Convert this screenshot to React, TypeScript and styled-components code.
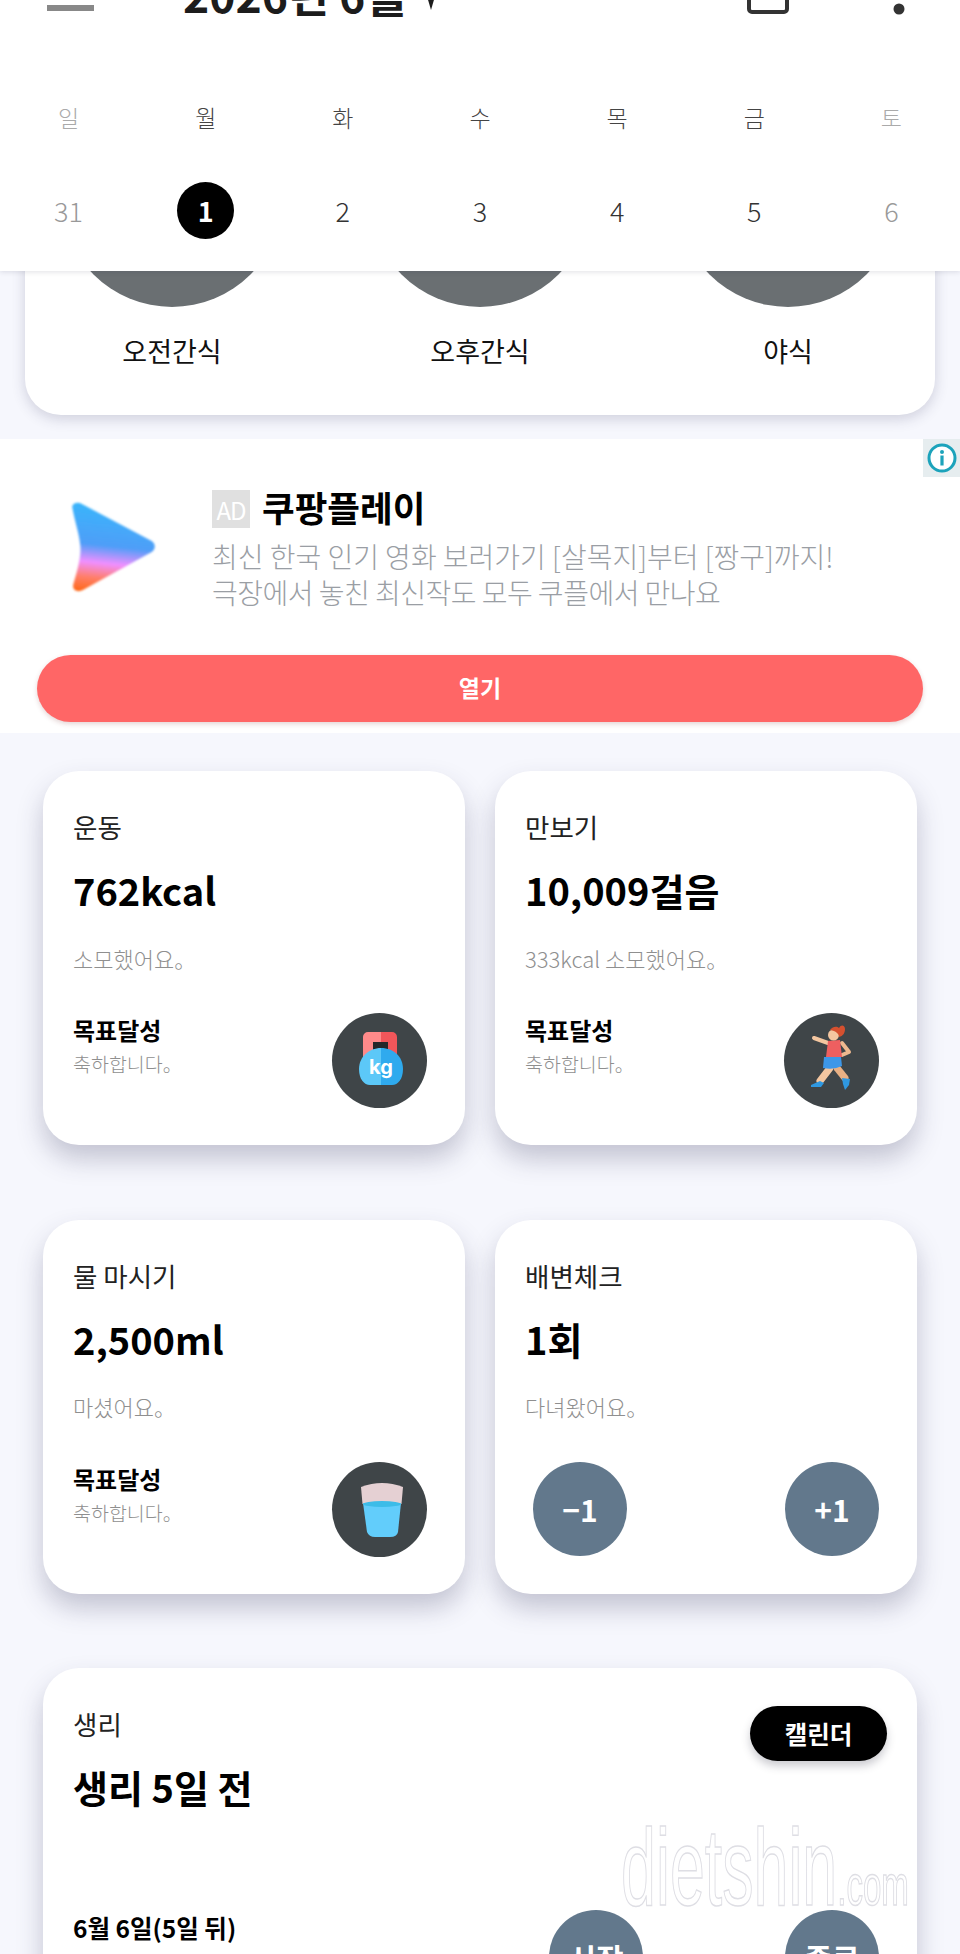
import React, { FC } from 'react';
import styled, { createGlobalStyle } from 'styled-components';

const GlobalStyle = createGlobalStyle`
  html, body {
    margin: 0;
    padding: 0;
    background: #f6f7fd;
  }
  * {
    box-sizing: border-box;
  }
`;

const FONT = `"Noto Sans CJK KR", "Noto Sans", sans-serif`;

const Page = styled.div`
  position: relative;
  width: 960px;
  height: 1954px;
  overflow: hidden;
  background: #f6f7fd;
  font-family: ${FONT};
  color: #000;
`;

/* sticky calendar header, lies over the scrolled content */
const Header = styled.header`
  position: absolute;
  top: 0;
  left: 0;
  z-index: 5;
  width: 100%;
  height: 271px;
  background: #fff;
  box-shadow: 0 1px 5px rgba(40, 40, 70, 0.14);
`;

const TopBar = styled.div`
  display: flex;
  align-items: flex-end;
  height: 60px;
  margin-top: -40px;
  padding: 0 55px 0 47px;
`;

const MenuBar = styled.div`
  width: 47px;
  height: 6px;
  margin-bottom: 9px;
  background: #888;
`;

const MonthTitle = styled.div`
  margin-left: 89px;
  font-size: 44.5px;
  font-weight: 700;
  line-height: 50px;
  white-space: nowrap;
  color: #1c1c1c;
  transform: translateY(-1px);
`;

const MonthArrow = styled.svg`
  width: 14px;
  height: 24px;
  margin: 0 0 10px 18px;
`;

const CalendarIcon = styled.svg`
  width: 42px;
  height: 30px;
  margin: 0 0 6px auto;
`;

const DotsIcon = styled.svg`
  width: 12px;
  height: 30px;
  margin: 0 0 5px 104px;
`;

const WeekGrid = styled.div`
  display: grid;
  grid-template-columns: repeat(7, 1fr);
  justify-items: center;
  align-items: center;
`;

const WeekLabels = styled(WeekGrid)`
  margin-top: 79px;
  height: 36px;
`;

const WeekDays = styled(WeekGrid)`
  margin-top: 46px;
  height: 58px;
`;

const WeekLabel = styled.span<{ $muted?: boolean }>`
  font-size: 23px;
  font-weight: 300;
  line-height: 36px;
  color: ${(p) => (p.$muted ? '#aaa' : '#444')};
`;

const Day = styled.span<{ $muted?: boolean; $active?: boolean }>`
  display: flex;
  align-items: center;
  justify-content: center;
  width: 57px;
  height: 57px;
  border-radius: 50%;
  font-size: 27px;
  font-weight: ${(p) => (p.$active ? 700 : 300)};
  color: ${(p) => (p.$active ? '#fff' : p.$muted ? '#999' : '#333')};
  background: ${(p) => (p.$active ? '#000' : 'transparent')};
`;

/* scrolled content, the top of the first card sits under the header */
const Content = styled.main`
  padding-top: 55px;
`;

const MealCard = styled.section`
  display: flex;
  justify-content: center;
  margin: 0 25px;
  padding: 30px 0 46px;
  background: #fff;
  border-radius: 36px;
  box-shadow: 0 4px 14px rgba(50, 50, 90, 0.2);
`;

const Meal = styled.div`
  flex: 0 0 308px;
  display: flex;
  flex-direction: column;
  align-items: center;
`;

const MealCircle = styled.div`
  width: 222px;
  height: 222px;
  border-radius: 50%;
  background: #6a6f72;
`;

const MealName = styled.div`
  margin-top: 26px;
  font-size: 27px;
  line-height: 36px;
  font-weight: 400;
  color: #111;
`;

const AdSection = styled.section`
  position: relative;
  height: 294px;
  margin-top: 24px;
  padding: 0 37px;
  background: #fff;
`;

const AdInfo = styled.div`
  position: absolute;
  top: 0;
  right: 0;
  display: flex;
  align-items: center;
  justify-content: center;
  width: 37px;
  height: 38px;
  background: #e6edef;
`;

const AdBody = styled.div`
  display: flex;
  height: 216px;
`;

const AdLogo = styled.svg`
  flex: 0 0 auto;
  width: 102px;
  height: 102px;
  margin: 57px 0 0 27px;
`;

const AdText = styled.div`
  margin: 46px 0 0 46px;
`;

const AdTitleRow = styled.div`
  display: flex;
  align-items: center;
  gap: 12px;
  height: 44px;
`;

const AdBadge = styled.span`
  display: flex;
  align-items: center;
  justify-content: center;
  width: 38px;
  height: 38px;
  margin-top: 4px;
  background: #e0e0e0;
  font-size: 24px;
  color: #fff;
  letter-spacing: -1px;
`;

const AdTitle = styled.span`
  font-size: 35.5px;
  font-weight: 700;
  line-height: 44px;
  white-space: nowrap;
`;

const AdLine = styled.div<{ $tight?: boolean }>`
  font-size: 28px;
  font-weight: 300;
  line-height: 36px;
  letter-spacing: ${(p) => (p.$tight ? '-0.5px' : '0')};
  white-space: nowrap;
  color: #9a9ea4;
`;

const AdLines = styled.div`
  margin-top: 9px;
`;

const OpenButton = styled.div`
  display: flex;
  align-items: center;
  justify-content: center;
  height: 67px;
  padding-bottom: 4px;
  border-radius: 34px;
  background: #ff6666;
  box-shadow: 0 2px 5px rgba(120, 40, 40, 0.2);
  font-size: 23px;
  font-weight: 700;
  color: #fff;
`;

const CardGrid = styled.div`
  display: grid;
  grid-template-columns: 422px 422px;
  column-gap: 30px;
  row-gap: 74.5px;
  padding: 38px 43px 0;
`;

const Card = styled.article<{ $wide?: boolean }>`
  position: relative;
  grid-column: ${(p) => (p.$wide ? '1 / span 2' : 'auto')};
  height: ${(p) => (p.$wide ? '420px' : '374px')};
  padding: 38px 38px 38px 30px;
  background: #fff;
  border-radius: 36px;
  box-shadow: 0 14px 26px rgba(50, 50, 90, 0.26);
`;

const CardLabel = styled.div`
  font-size: 26.5px;
  font-weight: 400;
  line-height: 36px;
  color: #222;
`;

const CardValue = styled.div`
  margin-top: 20px;
  font-size: 38px;
  font-weight: 700;
  line-height: 50px;
  white-space: nowrap;
`;

const CardNote = styled.div`
  margin-top: 27.5px;
  font-size: 22px;
  font-weight: 300;
  line-height: 30px;
  white-space: nowrap;
  color: #8f8f8f;
`;

const CardFooter = styled.div`
  display: flex;
  justify-content: space-between;
  align-items: flex-start;
  margin-top: 40.5px;
`;

const GoalText = styled.div`
  padding-top: 1px;
`;

const GoalTitle = styled.div`
  font-size: 24px;
  font-weight: 700;
  line-height: 32px;
`;

const GoalNote = styled.div`
  margin-top: 3px;
  font-size: 19.5px;
  font-weight: 300;
  line-height: 30px;
  color: #8f8f8f;
`;

const IconCircle = styled.div`
  flex: 0 0 auto;
  width: 95px;
  height: 95px;
  border-radius: 50%;
  background: #3f4548;
  overflow: hidden;
`;

const RoundButton = styled.div<{ $inset?: boolean }>`
  flex: 0 0 auto;
  display: flex;
  align-items: center;
  justify-content: center;
  width: 94px;
  height: 94px;
  margin-left: ${(p) => (p.$inset ? '8px' : '0')};
  border-radius: 50%;
  background: #62788c;
  font-size: 30px;
  font-weight: 700;
  color: #fff;
`;

const PeriodHead = styled.div`
  display: flex;
  justify-content: space-between;
  align-items: flex-start;
`;

const PillButton = styled.div`
  display: flex;
  align-items: center;
  justify-content: center;
  width: 137px;
  height: 55px;
  margin-right: -8px;
  border-radius: 28px;
  background: #000;
  box-shadow: 0 5px 8px rgba(50, 50, 70, 0.25);
  font-size: 24.5px;
  font-weight: 700;
  color: #fff;
`;

const PeriodRow = styled.div`
  display: flex;
  justify-content: space-between;
  align-items: flex-start;
  margin-top: 98px;
`;

const PeriodDate = styled.div`
  padding-top: 2px;
  font-size: 24.5px;
  font-weight: 700;
  line-height: 32px;
  white-space: nowrap;
`;

const PeriodButtons = styled.div`
  display: flex;
  gap: 142px;
`;

const Watermark = styled.div`
  position: absolute;
  top: 134px;
  right: 8px;
  display: flex;
  align-items: baseline;
  transform: scaleX(0.57);
  transform-origin: right center;
  font-family: "Liberation Sans", sans-serif;
  font-size: 110px;
  line-height: 130px;
  white-space: nowrap;
  color: #fff;
  -webkit-text-stroke: 1.5px #dedee4;
  pointer-events: none;
`;

const WatermarkSuffix = styled.span`
  font-size: 58px;
`;

const KettlebellIcon: FC = () => (
  <svg width="95" height="95" viewBox="0 0 95 95">
    <path d="M49 19H36a5 5 0 0 0-5 5v20h10V29h8z" fill="#ff8a8a" />
    <path d="M49 19h11a5 5 0 0 1 5 5v20H56V29h-7z" fill="#f2565a" />
    <rect x="41" y="29" width="15" height="7" fill="#26282a" />
    <path d="M49 35c-12 0-22 9-22 21 0 10 5 16 11 16h11z" fill="#5cc8f8" />
    <path d="M49 35c13 0 22 9 22 21 0 10-5 16-11 16H49z" fill="#2faaee" />
    <text x="49" y="61" textAnchor="middle" fontSize="20" fontWeight="700" fill="#fff" fontFamily="Inter, sans-serif">
      kg
    </text>
  </svg>
);

const RunnerIcon: FC = () => (
  <svg width="95" height="95" viewBox="0 0 95 95">
    <path d="M44 30 30 25" stroke="#f3c6a0" strokeWidth="4" strokeLinecap="round" fill="none" />
    <path d="M58 30l7 9-7 3" stroke="#eeb98f" strokeWidth="4" strokeLinecap="round" strokeLinejoin="round" fill="none" />
    <path d="M46 55 36 68" stroke="#f3c6a0" strokeWidth="7" strokeLinecap="round" />
    <path d="M53 55l8 10" stroke="#e8b084" strokeWidth="7" strokeLinecap="round" fill="none" />
    <path d="M44 28l12-1 2 17H42z" fill="#ee5f60" />
    <path d="M40 44h17l1 9q-8 4-19 2z" fill="#3d97e8" />
    <circle cx="49.500" cy="22" r="5.500" fill="#f3c6a0" />
    <path d="M46 17c3-4 7-4 9-2 2-4 6-3 6 1s-2 7-6 8c0-3-3-6-9-7z" fill="#d5502f" />
    <path d="M27 72l9-4 4 2-3 4H27z" fill="#2f98e0" />
    <path d="M58 65l8 1-1 6-4 5-2-6z" fill="#2f98e0" />
  </svg>
);

const GlassIcon: FC = () => (
  <svg width="95" height="95" viewBox="0 0 95 95">
    <path d="M29 25q21-8 42 0l-1.500 17H30.500z" fill="#e5d0d3" />
    <path d="M31 41h38l-3 29q-1 5-8 5H43q-6 0-8-5z" fill="#62cdfb" />
    <ellipse cx="50" cy="42" rx="19" ry="3" fill="#3cbce8" />
  </svg>
);

const WEEK = ['일', '월', '화', '수', '목', '금', '토'];
const DAYS = ['31', '1', '2', '3', '4', '5', '6'];

const GoalFooter: FC<{ icon: React.ReactNode }> = ({ icon }) => (
  <CardFooter>
    <GoalText>
      <GoalTitle>목표달성</GoalTitle>
      <GoalNote>축하합니다。</GoalNote>
    </GoalText>
    <IconCircle>{icon}</IconCircle>
  </CardFooter>
);

const App: FC = () => (
  <Page>
    <GlobalStyle />
    <Header>
      <TopBar>
        <MenuBar />
        <MonthTitle>2026년 6월</MonthTitle>
        <MonthArrow viewBox="0 0 14 24">
          <path d="M0 0h14L7 24z" fill="#1c1c1c" />
        </MonthArrow>
        <CalendarIcon viewBox="0 0 42 30">
          <rect x="2" y="-20" width="38" height="48" rx="3" fill="none" stroke="#333" strokeWidth="4" />
        </CalendarIcon>
        <DotsIcon viewBox="0 0 12 30">
          <circle cx="6" cy="24" r="5.500" fill="#333" />
        </DotsIcon>
      </TopBar>
      <WeekLabels>
        {WEEK.map((d, i) => (
          <WeekLabel key={d} $muted={i === 0 || i === 6}>
            {d}
          </WeekLabel>
        ))}
      </WeekLabels>
      <WeekDays>
        {DAYS.map((d, i) => (
          <Day key={d} $muted={i === 0 || i === 6} $active={i === 1}>
            {d}
          </Day>
        ))}
      </WeekDays>
    </Header>

    <Content>
      <MealCard>
        {['오전간식', '오후간식', '야식'].map((m) => (
          <Meal key={m}>
            <MealCircle />
            <MealName>{m}</MealName>
          </Meal>
        ))}
      </MealCard>

      <AdSection>
        <AdInfo>
          <svg width="30" height="30" viewBox="0 0 30 30">
            <circle cx="15" cy="15" r="13" fill="#fff" stroke="#1ca3bb" strokeWidth="3" />
            <circle cx="15" cy="9" r="2" fill="#1ca3bb" />
            <rect x="13.400" y="12.500" width="3.200" height="10" fill="#1ca3bb" />
          </svg>
        </AdInfo>
        <AdBody>
          <AdLogo viewBox="0 0 100 100">
            <defs>
              <linearGradient id="playFill" x1="0.4" y1="0" x2="0.3" y2="1">
                <stop offset="0" stopColor="#38b6fb" />
                <stop offset="0.48" stopColor="#4f9ef8" />
                <stop offset="0.68" stopColor="#f08fff" />
                <stop offset="0.85" stopColor="#ff7f6a" />
                <stop offset="1" stopColor="#ff6a1f" />
              </linearGradient>
              <filter id="playSoft">
                <feGaussianBlur stdDeviation="1.2" />
              </filter>
            </defs>
            <path
              d="M8 10c2-4 6-4 10-2l68 36c4 3 4 8 0 11L19 92c-5 3-11 1-10-5 4-14 8-27 7-38C15 36 10 24 8 10z"
              fill="url(#playFill)"
              filter="url(#playSoft)"
            />
          </AdLogo>
          <AdText>
            <AdTitleRow>
              <AdBadge>AD</AdBadge>
              <AdTitle>쿠팡플레이</AdTitle>
            </AdTitleRow>
            <AdLines>
              <AdLine>최신 한국 인기 영화 보러가기 [살목지]부터 [짱구]까지!</AdLine>
              <AdLine $tight>극장에서 놓친 최신작도 모두 쿠플에서 만나요</AdLine>
            </AdLines>
          </AdText>
        </AdBody>
        <OpenButton>열기</OpenButton>
      </AdSection>

      <CardGrid>
        <Card>
          <CardLabel>운동</CardLabel>
          <CardValue>762kcal</CardValue>
          <CardNote>소모했어요。</CardNote>
          <GoalFooter icon={<KettlebellIcon />} />
        </Card>
        <Card>
          <CardLabel>만보기</CardLabel>
          <CardValue>10,009걸음</CardValue>
          <CardNote>333kcal 소모했어요。</CardNote>
          <GoalFooter icon={<RunnerIcon />} />
        </Card>
        <Card>
          <CardLabel>물 마시기</CardLabel>
          <CardValue>2,500ml</CardValue>
          <CardNote>마셨어요。</CardNote>
          <GoalFooter icon={<GlassIcon />} />
        </Card>
        <Card>
          <CardLabel>배변체크</CardLabel>
          <CardValue>1회</CardValue>
          <CardNote>다녀왔어요。</CardNote>
          <CardFooter>
            <RoundButton $inset>−1</RoundButton>
            <RoundButton>+1</RoundButton>
          </CardFooter>
        </Card>
        <Card $wide>
          <PeriodHead>
            <div>
              <CardLabel>생리</CardLabel>
              <CardValue>생리 5일 전</CardValue>
            </div>
            <PillButton>캘린더</PillButton>
          </PeriodHead>
          <Watermark>
            dietshin<WatermarkSuffix>.com</WatermarkSuffix>
          </Watermark>
          <PeriodRow>
            <PeriodDate>6월 6일(5일 뒤)</PeriodDate>
            <PeriodButtons>
              <RoundButton>시작</RoundButton>
              <RoundButton>종료</RoundButton>
            </PeriodButtons>
          </PeriodRow>
        </Card>
      </CardGrid>
    </Content>
  </Page>
);

export default App;
